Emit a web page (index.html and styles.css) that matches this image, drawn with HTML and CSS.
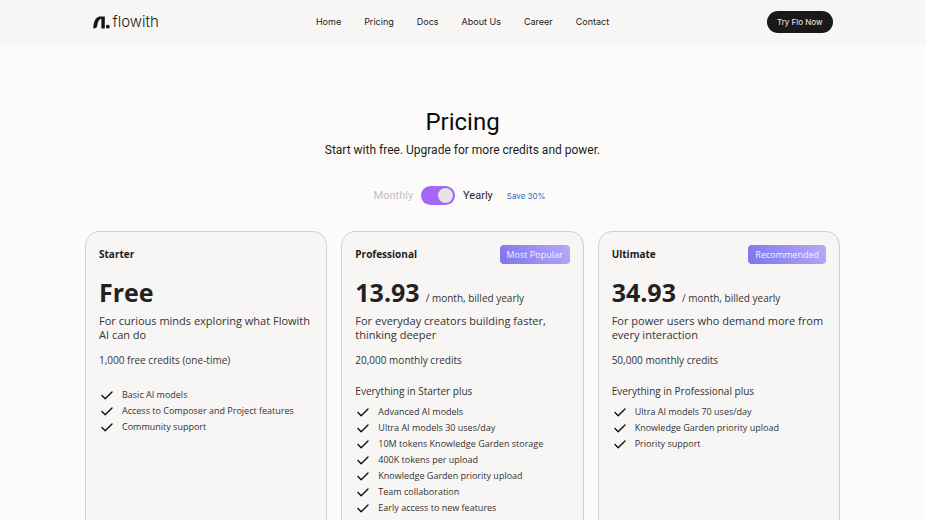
FILE: index.html
```html
<!DOCTYPE html>
<html lang="en">
  <head>
    <meta charset="UTF-8" />
    <meta name="viewport" content="width=device-width, initial-scale=1.0" />
    <title>Flowith Pricing</title>
    <link rel="stylesheet" href="styles.css">
  </head>
  <body>
    <svg class="sprite" aria-hidden="true">
      <symbol id="check" viewBox="0 0 12 9">
        <path d="M1 4.6 L4.2 7.8 L11 1" fill="none" stroke="#111" stroke-width="1.4" stroke-linecap="round" stroke-linejoin="round" />
      </symbol>
    </svg>

    <header class="header">
      <div class="header-inner">
        <a class="logo" href="#">
          <svg class="logo-mark" viewBox="0 0 17 13" aria-hidden="true">
            <path d="M0.4 12.4 C0 8.6 2 0.8 6.6 0.6 H7.6 V3 C5.4 4 4.6 7 4.2 9.4 C3.8 11.6 2.8 12.4 0.4 12.4 Z" fill="#151515" />
            <path d="M7.2 0.6 H11.8 V12.4 H8.4 V3 H7.2 Z" fill="#151515" />
            <circle cx="14.8" cy="10.7" r="1.9" fill="#151515" />
          </svg>
          <span>flowith</span>
        </a>
        <nav class="nav">
          <a href="#">Home</a>
          <a href="#">Pricing</a>
          <a href="#">Docs</a>
          <a href="#">About Us</a>
          <a href="#">Career</a>
          <a href="#">Contact</a>
        </nav>
        <button class="try-button">Try Flo Now</button>
      </div>
    </header>

    <main>
      <section class="hero">
        <h1>Pricing</h1>
        <p>Start with free. Upgrade for more credits and power.</p>
      </section>

      <div class="billing">
        <label class="period off" for="billingToggle">Monthly</label>
        <input class="toggle" type="checkbox" id="billingToggle" aria-label="Yearly billing" checked />
        <label class="period" for="billingToggle">Yearly</label>
        <span class="save">Save 30%</span>
      </div>

      <section class="plans">
        <article class="card">
          <div class="card-top">
            <h2>Starter</h2>
          </div>
          <div class="price"><strong>Free</strong></div>
          <p class="desc">For curious minds exploring what Flowith AI can do</p>
          <p class="credits">1,000 free credits (one-time)</p>
          <ul class="features">
            <li><svg><use href="#check" /></svg>Basic AI models</li>
            <li><svg><use href="#check" /></svg>Access to Composer and Project features</li>
            <li><svg><use href="#check" /></svg>Community support</li>
          </ul>
        </article>

        <article class="card">
          <div class="card-top">
            <h2>Professional</h2>
            <span class="badge">Most Popular</span>
          </div>
          <div class="price"><strong>13.93</strong><span>/ month, billed yearly</span></div>
          <p class="desc">For everyday creators building faster, thinking deeper</p>
          <p class="credits">20,000 monthly credits</p>
          <p class="plus">Everything in Starter plus</p>
          <ul class="features">
            <li><svg><use href="#check" /></svg>Advanced AI models</li>
            <li><svg><use href="#check" /></svg>Ultra AI models 30 uses/day</li>
            <li><svg><use href="#check" /></svg>10M tokens Knowledge Garden storage</li>
            <li><svg><use href="#check" /></svg>400K tokens per upload</li>
            <li><svg><use href="#check" /></svg>Knowledge Garden priority upload</li>
            <li><svg><use href="#check" /></svg>Team collaboration</li>
            <li><svg><use href="#check" /></svg>Early access to new features</li>
          </ul>
        </article>

        <article class="card">
          <div class="card-top">
            <h2>Ultimate</h2>
            <span class="badge">Recommended</span>
          </div>
          <div class="price"><strong>34.93</strong><span>/ month, billed yearly</span></div>
          <p class="desc">For power users who demand more from every interaction</p>
          <p class="credits">50,000 monthly credits</p>
          <p class="plus">Everything in Professional plus</p>
          <ul class="features">
            <li><svg><use href="#check" /></svg>Ultra AI models 70 uses/day</li>
            <li><svg><use href="#check" /></svg>Knowledge Garden priority upload</li>
            <li><svg><use href="#check" /></svg>Priority support</li>
          </ul>
        </article>
      </section>
    </main>
  </body>
</html>
```

FILE: styles.css
```css
* {
  box-sizing: border-box;
}

body {
  margin: 0;
  background: #fcfbf9;
  color: #1c1c1c;
  font-family: "Inter", sans-serif;
}

h1, h2, p, ul {
  margin: 0;
  padding: 0;
}

a {
  color: inherit;
  text-decoration: none;
}

.sprite {
  display: none;
}

/* header */
.header {
  background: #f7f6f4;
}

.header-inner {
  display: grid;
  grid-template-columns: 1fr auto 1fr;
  align-items: center;
  max-width: 740px;
  margin: 0 auto;
  padding: 11px 0 10px;
}

.logo {
  display: flex;
  align-items: center;
  gap: 3px;
  font-size: 15px;
  font-weight: 300;
  line-height: 20px;
}

.logo-mark {
  width: 17px;
  height: 13px;
}

.nav {
  display: flex;
  gap: 23px;
  font-size: 9px;
  line-height: 12px;
}

.try-button {
  justify-self: end;
  height: 22px;
  padding: 0 10px;
  border: none;
  border-radius: 11px;
  background: #191919;
  color: #f2f2f2;
  font-family: "Inter", sans-serif;
  font-size: 8px;
  cursor: pointer;
}

/* hero */
.hero {
  padding-top: 62px;
  font-family: "Roboto", sans-serif;
  text-align: center;
}

.hero h1 {
  color: #0c0c0c;
  font-size: 24px;
  font-weight: 400;
  line-height: 34px;
}

.hero p {
  margin-top: 2px;
  font-size: 12px;
  line-height: 18px;
}

.billing {
  display: flex;
  align-items: center;
  justify-content: center;
  gap: 8px;
  margin: 27px 0 26px;
  padding-right: 6px;
  font-family: "Roboto", sans-serif;
}

.period {
  font-size: 11px;
}

.period.off {
  color: #c2c2c2;
}

.toggle {
  appearance: none;
  display: flex;
  width: 34px;
  height: 19px;
  margin: 0;
  padding: 2px;
  border-radius: 10px;
  background: #a466f5;
  cursor: pointer;
}

.toggle::before {
  content: "";
  width: 15px;
  height: 15px;
  border-radius: 50%;
  background: #e6e4e6;
}

.toggle:checked {
  justify-content: flex-end;
}

.save {
  margin-left: 6px;
  color: #3267c0;
  font-family: "Inter", sans-serif;
  font-size: 8px;
}

/* plans */
.plans {
  display: grid;
  grid-template-columns: repeat(3, 1fr);
  gap: 14px;
  max-width: 755px;
  margin: 0 auto;
  padding-bottom: 40px;
  font-family: "Open Sans", sans-serif;
}

.card {
  padding: 12px 13px 32px;
  border: 1px solid #d0d0ce;
  border-radius: 14px;
  background: #f7f6f5;
  color: #333;
}

.card-top {
  display: flex;
  align-items: center;
  justify-content: space-between;
  height: 20px;
}

.card h2 {
  color: #1c1c1c;
  font-size: 10px;
  font-weight: 700;
}

.badge {
  padding: 0 7px;
  border-radius: 4px;
  background: linear-gradient(60deg, #7d74ec, #b6aaf8);
  color: #f4f2ff;
  font-size: 9px;
  line-height: 19px;
}

.price {
  display: flex;
  align-items: baseline;
  gap: 6px;
  height: 36px;
  margin-top: 10px;
  font-size: 10px;
  line-height: 36px;
}

.price strong {
  color: #222;
  font-size: 25px;
}

.desc {
  margin-top: 4px;
  font-size: 11px;
  line-height: 14px;
}

.credits {
  margin-top: 11px;
  font-size: 10px;
  line-height: 14px;
}

.plus {
  margin-top: 17px;
  font-size: 10px;
  line-height: 14px;
}

.features {
  margin-top: 20px;
  font-size: 9px;
  line-height: 16px;
  list-style: none;
}

.plus + .features {
  margin-top: 6px;
}

.features li {
  display: flex;
  align-items: center;
  gap: 9px;
  padding-left: 2px;
}

.features svg {
  flex: none;
  width: 12px;
  height: 9px;
}
```
